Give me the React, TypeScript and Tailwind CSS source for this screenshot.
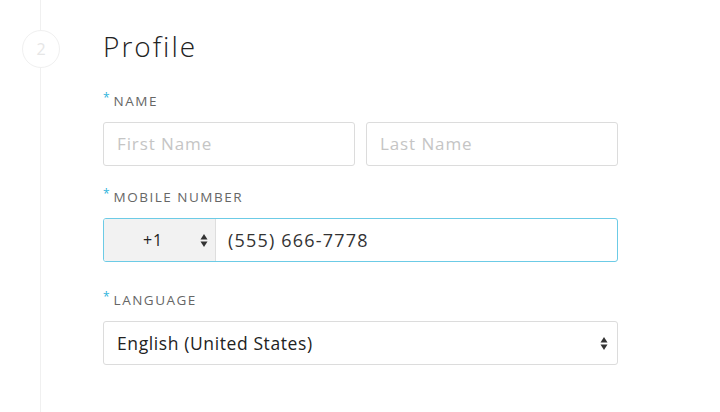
import React from 'react';

const font = { fontFamily: '"Open Sans", "Liberation Sans", sans-serif' };

function Arrows() {
  return (
    <svg width="8" height="15" viewBox="0 0 8 15" className="shrink-0">
      <path d="M4 1 L7.5 6.5 H0.5 Z" fill="#333" />
      <path d="M4 14 L7.5 8.5 H0.5 Z" fill="#333" />
    </svg>
  );
}

function Label({ children }: { children: React.ReactNode }) {
  return (
    <div className="flex items-start h-[16px] mb-[13px]">
      <span className="text-[#2fb4dc] text-[12px] leading-[10px] mr-[4px]">*</span>
      <span className="text-[#666] text-[13.5px] leading-[16px] tracking-[1.5px] uppercase">{children}</span>
    </div>
  );
}

export default function App() {
  return (
    <div className="w-[720px] h-[412px] bg-white flex overflow-hidden" style={font}>
      {/* step rail */}
      <div className="w-[82px] relative shrink-0">
        <div className="absolute left-[40px] top-0 bottom-0 w-px bg-[#f0f0f0]" />
        <div className="absolute left-[22px] top-[30px] w-[38px] h-[38px] rounded-full border border-[#f0f0f0] bg-white flex items-center justify-center text-[#e6e6e6] text-[16px]">
          2
        </div>
      </div>

      <div className="pl-[21px] pt-[26px] w-[536px]">
        <h2 className="text-[28px] font-light text-[#222] leading-[40px] tracking-[2px] mb-[27px]">Profile</h2>

        <Label>Name</Label>
        <div className="flex gap-[11px] mb-[23px]">
          <div className="flex-1 h-[44px] border border-[#dcdcdc] rounded-[3px] flex items-center px-[13px] text-[17px] text-[#c5c5c5] tracking-[0.9px]">
            First Name
          </div>
          <div className="flex-1 h-[44px] border border-[#dcdcdc] rounded-[3px] flex items-center px-[13px] text-[17px] text-[#c5c5c5] tracking-[0.9px]">
            Last Name
          </div>
        </div>

        <Label>Mobile Number</Label>
        <div className="h-[44px] border border-[#6ccbe6] rounded-[3px] flex mb-[30px]">
          <div className="w-[112px] bg-[#f2f2f2] rounded-l-[2px] border-r border-r-[#dedede] flex items-center pl-[39px] pr-[7px]">
            <span className="flex-1 text-[16px] text-[#222] tracking-[0.8px]">+1</span>
            <Arrows />
          </div>
          <div className="flex-1 flex items-center pl-[12px] text-[18px] text-[#333] tracking-[1.2px]">(555) 666-7778</div>
        </div>

        <Label>Language</Label>
        <div className="h-[44px] border border-[#dcdcdc] rounded-[3px] flex items-center pl-[13px] pr-[9px]">
          <span className="flex-1 text-[17.5px] text-[#222] tracking-[0.6px]">English (United States)</span>
          <Arrows />
        </div>
      </div>
    </div>
  );
}
